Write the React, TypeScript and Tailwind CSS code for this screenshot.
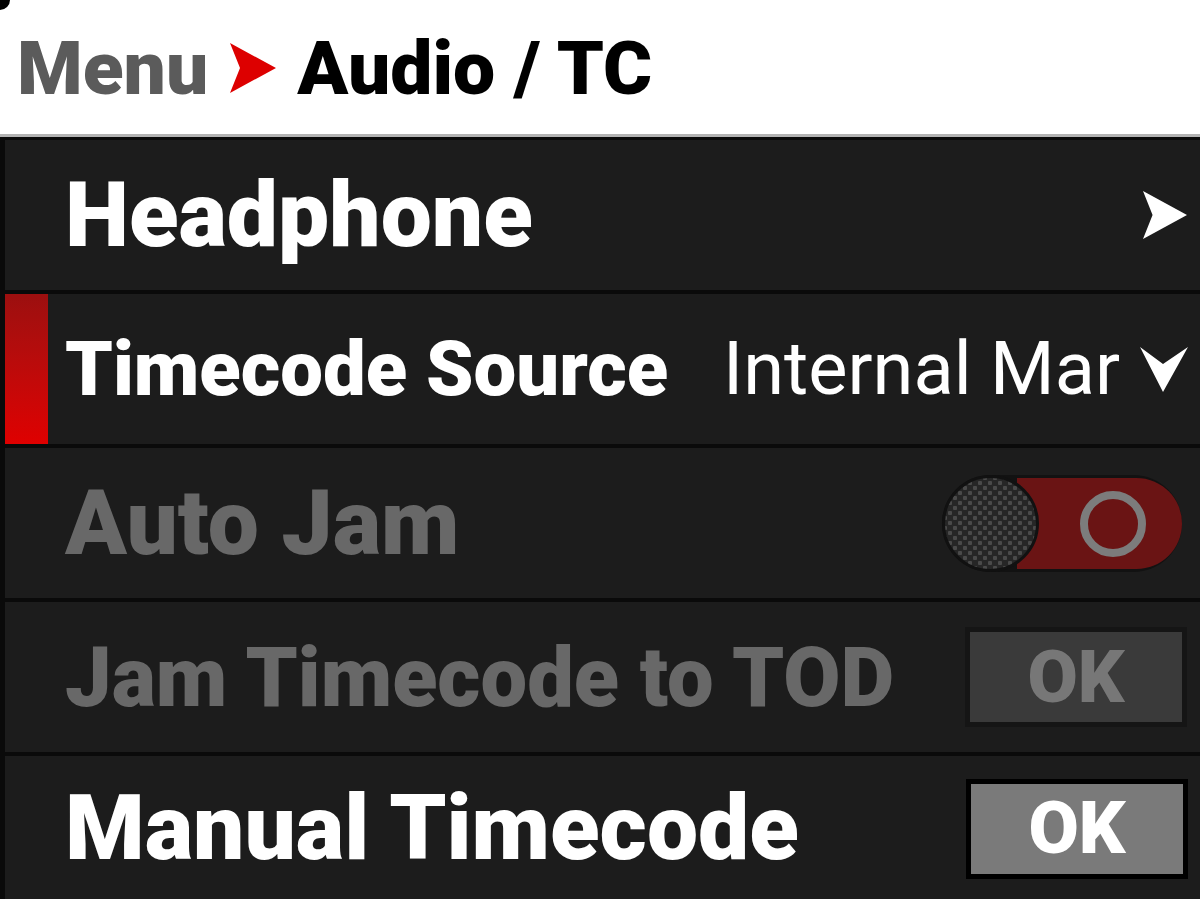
import React from 'react';

const font = { fontFamily: "Roboto, 'Liberation Sans', sans-serif" };

function Arrow({ className, fill }: { className: string; fill: string }) {
  return (
    <svg viewBox="0 0 46 50" className={className}>
      <path d="M0 0 L46 25 L0 50 L10 25 Z" fill={fill} />
    </svg>
  );
}

function DownArrow() {
  return (
    <svg viewBox="0 0 48 45" className="w-[48px] h-[45px] shrink-0">
      <path d="M0 0 L23 17 L48 0 L23 45 Z" fill="#fff" />
    </svg>
  );
}

function Toggle() {
  return (
    <div className="relative w-[240px] h-[97px] rounded-full bg-[#121212] shrink-0">
      {/* 빨간 트랙 */}
      <div className="absolute right-0 top-[3px] w-[165px] h-[91px] rounded-r-full bg-[#6a1414]" />
      {/* 링 */}
      <div className="absolute left-[138px] top-[16px] w-[66px] h-[66px] rounded-full border-[8px] border-[#7c7c7c]" />
      {/* 노브 */}
      <div className="absolute left-0 top-0 w-[97px] h-[97px] rounded-full border-[3px] border-[#111] bg-[#262626] bg-[radial-gradient(circle,#4a4a4a_2px,transparent_2.5px),radial-gradient(circle,#4a4a4a_2px,transparent_2.5px)] bg-[length:10px_10px] bg-[position:0_0,5px_5px]" />
    </div>
  );
}

function OkButton({ active }: { active: boolean }) {
  return (
    <div className={`w-[222px] h-[100px] p-[5px] shrink-0 ${active ? 'bg-black' : 'bg-[#151515]'}`}>
      <div
        className={`w-full h-full flex items-center justify-center text-[73px] font-black leading-none ${active ? 'bg-[#7a7a7a] text-white' : 'bg-[#3a3a3a] text-[#777]'}`}
      >
        OK
      </div>
    </div>
  );
}

export default function App() {
  return (
    <div className="w-[1200px] h-[899px] overflow-hidden bg-white flex flex-col relative" style={font}>
      <div className="absolute left-0 top-0 w-[10px] h-[10px] rounded-br-full bg-black" />

      {/* 헤더 */}
      <div className="h-[134px] flex items-center pl-[17px] pt-[2px] shrink-0">
        <span className="text-[75px] font-black text-[#5b5b5b] leading-none">Menu</span>
        <Arrow className="w-[46px] h-[50px] ml-[22px] mr-[21px]" fill="#dd0000" />
        <span className="text-[75px] font-black text-black leading-none">Audio / TC</span>
      </div>
      <div className="h-[3px] bg-[#b3b3b3] shrink-0" />

      {/* 리스트 */}
      <div className="flex-1 bg-[#0a0a0a] pl-[5px] pt-[3px] flex flex-col gap-[4px]">
        <div className="h-[150px] bg-[#1c1c1c] flex items-center pl-[60px] pr-[13px]">
          <span className="flex-1 whitespace-nowrap text-[91px] font-black text-white leading-none">Headphone</span>
          <Arrow className="w-[44px] h-[50px] shrink-0" fill="#fff" />
        </div>

        <div className="h-[150px] bg-[#1c1c1c] flex items-center pr-[12px]">
          <div className="w-[43px] h-full bg-gradient-to-b from-[#9c0f0f] to-[#df0000] shrink-0" />
          <span className="flex-1 min-w-0 whitespace-nowrap pl-[17px] text-[76px] font-black text-white leading-none">Timecode Source</span>
          <span className="whitespace-nowrap text-[74px] text-white leading-none mr-[20px]">Internal Mar</span>
          <DownArrow />
        </div>

        <div className="h-[150px] bg-[#1c1c1c] flex items-center pl-[60px] pr-[18px]">
          <span className="flex-1 whitespace-nowrap text-[91px] font-black text-[#686868] leading-none">Auto Jam</span>
          <Toggle />
        </div>

        <div className="h-[150px] bg-[#1c1c1c] flex items-center pl-[60px] pr-[13px]">
          <span className="flex-1 whitespace-nowrap text-[83px] font-black text-[#686868] leading-none">Jam Timecode to TOD</span>
          <OkButton active={false} />
        </div>

        <div className="flex-1 bg-[#1c1c1c] flex items-center pl-[60px] pr-[12px] pt-[2px]">
          <span className="flex-1 whitespace-nowrap text-[91px] font-black text-white leading-none">Manual Timecode</span>
          <OkButton active={true} />
        </div>
      </div>
    </div>
  );
}
